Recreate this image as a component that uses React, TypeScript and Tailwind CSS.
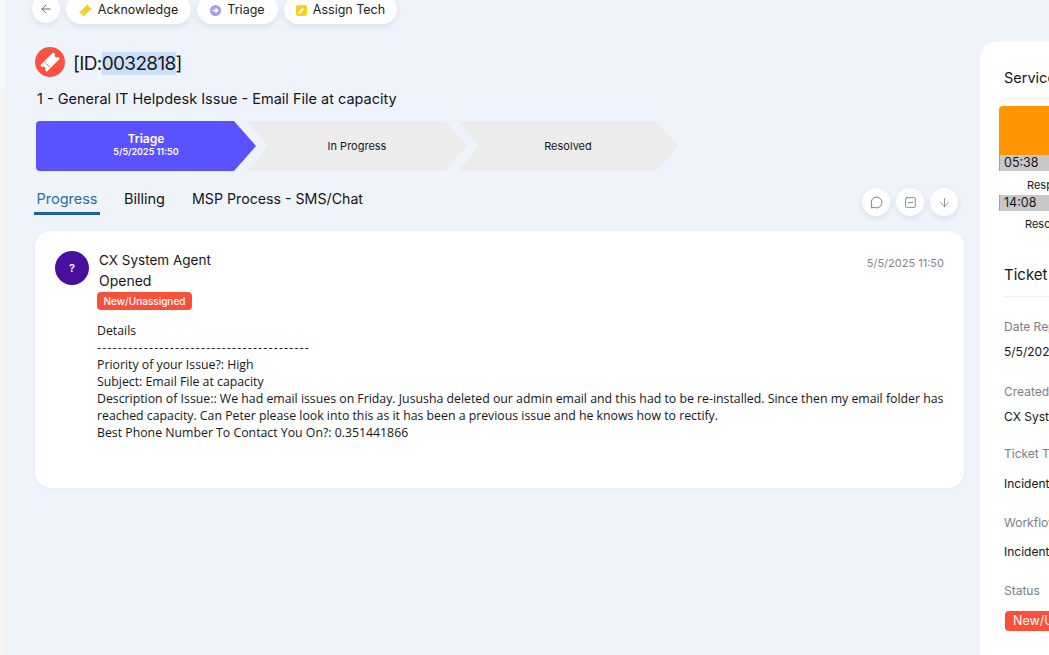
import React from "react";
import { ArrowDown, ArrowLeft, MessageCircle, SquareMinus } from "lucide-react";

const display = "font-['Inter','Liberation_Sans',sans-serif]";

const stages = [
  { label: "Triage", date: "5/5/2025 11:50", active: true },
  { label: "In Progress", active: false },
  { label: "Resolved", active: false },
];

const tabs = ["Progress", "Billing", "MSP Process - SMS/Chat"];

const fields = [
  { label: "Date Reported", value: "5/5/2025 11:50", top: "mt-0", gap: "mt-[9px]" },
  { label: "Created By", value: "CX System Agent", top: "mt-[24px]", gap: "mt-[9px]" },
  { label: "Ticket Type", value: "Incident", top: "mt-[21px]", gap: "mt-[14px]" },
  { label: "Workflow", value: "Incident", top: "mt-[23px]", gap: "mt-[13px]" },
];

const body = [
  "Priority of your Issue?: High",
  "Subject: Email File at capacity",
  "Description of Issue:: We had email issues on Friday. Jususha deleted our admin email and this had to be re-installed. Since then my email folder has reached capacity. Can Peter please look into this as it has been a previous issue and he knows how to rectify.",
  "Best Phone Number To Contact You On?: 0.351441866",
];

const Ticket = ({ className }: { className: string }) => (
  <svg viewBox="0 0 24 24" className={className} fill="currentColor">
    <path
      fillRule="evenodd"
      transform="rotate(-45 12 12)"
      d="M1 6.5h22v3.3a2.2 2.2 0 0 0 0 4.4v3.3H1v-3.3a2.2 2.2 0 0 0 0-4.4Zm7 1.5h-1v2h1Zm0 3h-1v2h1Zm0 3h-1v2h1Z"
    />
  </svg>
);

const ActionButton = ({ icon, label, width }: { icon: React.ReactNode; label: string; width: string }) => (
  <button className={`flex h-[29px] items-center justify-center gap-[6px] rounded-full bg-white pt-[1px] text-[12.5px] text-[#1d1d1f] shadow-[0_2px_6px_rgba(30,40,90,0.1)] ${width}`}>
    {icon}
    <span>{label}</span>
  </button>
);

const RoundButton = ({ children }: { children: React.ReactNode }) => (
  <button className="flex h-7 w-7 items-center justify-center rounded-full bg-white text-[#55585e] shadow-[0_2px_6px_rgba(30,40,90,0.1)]">
    {children}
  </button>
);

const App: React.FC = () => {
  return (
    <div className={`flex h-[655px] w-[1049px] overflow-hidden bg-[#eff3fb] text-[#16161a] ${display}`}>
      <div className="flex w-[5px] flex-col">
        <div className="h-[87px] bg-[#f8f9fd]" />
        <div className="flex-1 bg-[#f5f5f5]" />
      </div>

      <main className="w-[975px] shrink-0 pl-[27px]">
        <div className="-mt-[5px] flex gap-[6px]">
          <button className="flex h-7 w-7 items-center justify-center rounded-full bg-white text-[#55585e] shadow-[0_2px_6px_rgba(30,40,90,0.1)]">
            <ArrowLeft size={14} strokeWidth={1.5} />
          </button>
          <ActionButton
            width="w-[125px]"
            label="Acknowledge"
            icon={<Ticket className="h-[13px] w-[13px] text-[#f6ce1c]" />}
          />
          <ActionButton
            width="w-[81px]"
            label="Triage"
            icon={
              <span className="flex h-[11px] w-[11px] items-center justify-center rounded-full bg-[#a49cf2]">
                <svg viewBox="0 0 10 10" className="h-[9px] w-[9px]" fill="none" stroke="white" strokeWidth="1.6">
                  <path d="M2 5h5.5M5 2.5 7.5 5 5 7.5" />
                </svg>
              </span>
            }
          />
          <ActionButton
            width="w-[113px]"
            label="Assign Tech"
            icon={
              <span className="flex h-[11px] w-[11px] items-center justify-center rounded-[2px] bg-[#fcd116]">
                <svg viewBox="0 0 10 10" className="h-[9px] w-[9px]" fill="white">
                  <path d="M1.5 8.5 2 6.4 6.5 2 8 3.5 3.6 8Z" />
                </svg>
              </span>
            }
          />
        </div>

        <div className="ml-[3px] mt-[23px] flex h-[30px] items-center gap-2">
          <span className="flex h-[30px] w-[30px] items-center justify-center rounded-full bg-[#fa5240] text-white">
            <Ticket className="h-[20px] w-[20px]" />
          </span>
          <h1 className="mt-[2px] text-[19px] font-normal leading-[23px] tracking-[-0.65px] text-[#1b1b25]">
            [ID:<span className="bg-[#cbe0f8]">0032818</span>]
          </h1>
        </div>

        <p className="ml-[5px] mt-[12px] text-[14.5px] leading-5">1 - General IT Helpdesk Issue - Email File at capacity</p>

        <div className="ml-[4px] mt-[12px] flex h-[50px]">
          {stages.map((stage) => (
            <div
              key={stage.label}
              className={
                stage.active
                  ? "flex h-[50px] w-[220px] flex-col items-center justify-center rounded-l-[4px] bg-[#5a52ff] pb-[2px] text-white [clip-path:polygon(0_0,198px_0,220px_50%,198px_100%,0_100%)]"
                  : "-ml-[9px] flex h-[50px] w-[220px] flex-col items-center justify-center bg-[#ececec] [clip-path:polygon(0_0,198px_0,220px_50%,198px_100%,0_100%,21px_50%)]"
              }
            >
              {stage.date ? (
                <>
                  <span className="text-[12px] font-semibold leading-[14px]">{stage.label}</span>
                  <span className="text-[9px] font-semibold leading-[12px]">{stage.date}</span>
                </>
              ) : (
                <span className="text-[11px]">{stage.label}</span>
              )}
            </div>
          ))}
        </div>

        <div className="mt-[17px] flex h-[28px] w-[926px] items-start justify-between">
          <div className="flex pl-[2px]">
            {tabs.map((tab, i) => (
              <div
                key={tab}
                className={
                  i === 0
                    ? "h-[27px] w-[66px] border-b-[3px] border-[#1a64a0] pt-[1px] text-center text-[14.5px] leading-5 text-[#2a6ea8]"
                    : i === 1
                      ? "ml-[24px] w-[41px] pt-[1px] text-[14.5px] leading-5"
                      : "ml-[27px] pt-[1px] text-[14.2px] leading-5"
                }
              >
                {tab}
              </div>
            ))}
          </div>
          <div className="flex gap-[6px]">
            <RoundButton><MessageCircle size={13} strokeWidth={1.4} /></RoundButton>
            <RoundButton><SquareMinus size={13} strokeWidth={1.2} /></RoundButton>
            <RoundButton><ArrowDown size={13} strokeWidth={1.2} /></RoundButton>
          </div>
        </div>

        <section className="ml-[3px] mt-[15px] h-[257px] w-[929px] rounded-[16px] bg-white pl-5 pr-5 pt-5 shadow-[0_1px_4px_rgba(30,40,90,0.04)]">
          <div className="flex">
            <span className="flex h-[34px] w-[34px] shrink-0 items-center justify-center rounded-full bg-[#4a0e9c] text-[11px] font-semibold text-white">?</span>
            <div className="ml-[10px] flex-1">
              <div className="flex items-start justify-between">
                <div className="text-[13.5px] leading-[18px]">CX System Agent</div>
                <div className="mt-[4px] text-[11px] leading-4 text-[#83868c]">5/5/2025 11:50</div>
              </div>
              <div className="text-[14px] leading-5">Opened</div>
              <span className="-ml-[2px] mt-[1px] flex h-[18px] w-[95px] items-center justify-center rounded-[4px] bg-[#f9503c] text-[10px] font-medium text-white">New/Unassigned</span>
            </div>
          </div>
          <div className="ml-[42px] mt-[12px] font-['Open_Sans',sans-serif] text-[12.3px] leading-[17px]">
            <p>Details</p>
            <p className="tracking-[1.24px]">-----------------------------------------</p>
            {body.map((line) => (
              <p key={line}>{line}</p>
            ))}
          </div>
        </section>
      </main>

      <aside className="mt-[42px] flex-1 overflow-hidden whitespace-nowrap rounded-tl-[16px] bg-white pl-[24px]">
        <div className="w-[200px]">
          <h2 className="mt-[26px] text-[14.5px] font-normal leading-5">Service Level</h2>
          <div className="mt-[10px] h-px bg-[#f0f0f0]" />
          <div className="-ml-[5px] mt-[7px] h-[49px] rounded-tl-[4px] bg-[#ff9500]" />
          <div className="-ml-[5px] h-4 border-l border-[#8cbf3f] bg-[#c8c8c8] pl-[4px] text-[12.5px] leading-4">05:38</div>
          <div className="ml-[23px] mt-[6px] text-[11px] leading-4">Response</div>
          <div className="-ml-[5px] mt-[2px] h-4 border-l border-[#8cbf3f] bg-[#c8c8c8] pl-[4px] text-[12.5px] leading-4">14:08</div>
          <div className="ml-[21px] mt-[5px] text-[11px] leading-4">Resolution</div>

          <h2 className="mt-[33px] text-[15px] font-normal leading-5">Ticket Details</h2>
          <div className="mb-[22px] mt-[11px] h-px bg-[#f0f0f0]" />
          {fields.map((field) => (
            <div key={field.label} className={field.top}>
              <div className="text-[12px] leading-4 text-[#7b7e85]">{field.label}</div>
              <div className={`${field.gap} text-[12px] leading-4`}>{field.value}</div>
            </div>
          ))}
          <div className="mt-[23px] text-[12px] leading-4 text-[#7b7e85]">Status</div>
          <span className="ml-[1px] mt-[12px] flex h-[20px] w-[95px] items-center rounded-[4px] bg-[#f9503c] pl-2 text-[12.5px] text-white">New/Unassigned</span>
        </div>
      </aside>
    </div>
  );
};

export default App;
